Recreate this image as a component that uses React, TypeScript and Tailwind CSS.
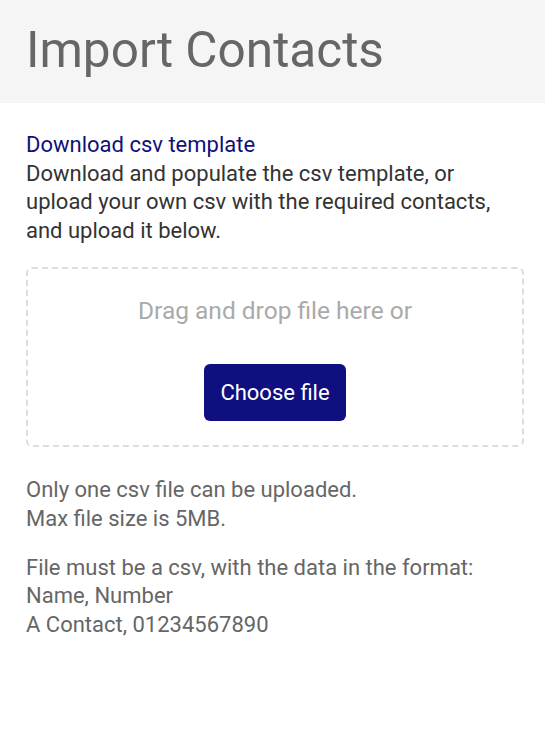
export default function App() {
  return (
    <main className="min-h-screen bg-white font-['Roboto',sans-serif] text-[22px] leading-[28.6px]">
      <header className="flex h-[103px] items-center bg-[#f5f5f5] px-[26px]">
        <h1 className="-mt-[2px] text-[49.5px] leading-none text-[#666666]">Import Contacts</h1>
      </header>

      <section className="pl-[26px] pr-[21px] pt-[28px]">
        <a href="#" className="block text-[#10107a]">
          Download csv template
        </a>
        <p className="text-[#333333]">
          Download and populate the csv template, or upload your own csv with the required contacts,
          and upload it below.
        </p>

        <div className="mt-[22px] flex h-[180px] flex-col items-center rounded-md border-2 border-dashed border-[#dddddd] pt-[26px]">
          <p className="text-[24.5px] leading-[31px] text-[#aaaaaa]">Drag and drop file here or</p>
          <button className="mt-[38px] h-[57px] w-[142px] rounded-md bg-[#0f0f80] text-[22px] text-white">
            Choose file
          </button>
        </div>

        <div className="mt-[29px] text-[#666666]">
          <p>Only one csv file can be uploaded.</p>
          <p>Max file size is 5MB.</p>
          <p className="mt-[20px]">File must be a csv, with the data in the format:</p>
          <p>Name, Number</p>
          <p>A Contact, 01234567890</p>
        </div>
      </section>
    </main>
  );
}
